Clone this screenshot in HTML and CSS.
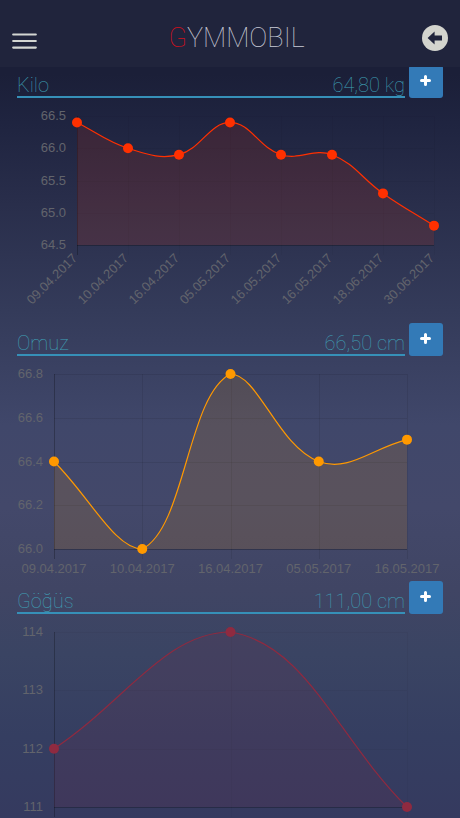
FILE: index.html
```html
<!DOCTYPE html>
<html lang="tr">
  <head>
    <meta charset="utf-8">
    <meta name="viewport" content="width=device-width, initial-scale=1.0">
    <title>Gymmobil</title>
    <link rel="stylesheet" href="styles.css">
    <script src="charts.js" defer></script>
  </head>
  <body>
    <header class="navbar">
      <button class="nav-button menu-button" aria-label="Menu">
        <svg width="25" height="16" viewBox="0 0 25 16">
          <path d="M1.2 1.5h22.6M1.2 8h22.6M1.2 14.6h22.6" stroke="#d3d6d2" stroke-width="2.2" stroke-linecap="round"/>
        </svg>
      </button>
      <h1 class="brand"><span class="brand-first">G</span>YMMOBIL</h1>
      <button class="nav-button" aria-label="Geri">
        <svg width="26" height="26" viewBox="0 0 26 26">
          <circle cx="13" cy="13" r="13" fill="#d3d4ce"/>
          <path d="M5.6 13L12.6 6.6V10.6H20V15.4H12.6V19.4Z" fill="#20243c"/>
        </svg>
      </button>
    </header>

    <main class="measures">
      <section class="measure">
        <div class="measure-head">
          <h2 class="measure-title"><span>Kilo</span><span>64,80 kg</span></h2>
          <button class="add-button" aria-label="Kilo ekle">
            <svg width="11" height="11" viewBox="0 0 11 11"><path d="M5.5 1.5v8M1.5 5.5h8" stroke="#fff" stroke-width="3" stroke-linecap="round"/></svg>
          </button>
        </div>
        <div class="chart chart-kilo" id="kilo"></div>
      </section>

      <section class="measure">
        <div class="measure-head">
          <h2 class="measure-title"><span>Omuz</span><span>66,50 cm</span></h2>
          <button class="add-button" aria-label="Omuz ekle">
            <svg width="11" height="11" viewBox="0 0 11 11"><path d="M5.5 1.5v8M1.5 5.5h8" stroke="#fff" stroke-width="3" stroke-linecap="round"/></svg>
          </button>
        </div>
        <div class="chart chart-omuz" id="omuz"></div>
      </section>

      <section class="measure">
        <div class="measure-head">
          <h2 class="measure-title"><span>Göğüs</span><span>111,00 cm</span></h2>
          <button class="add-button" aria-label="Göğüs ekle">
            <svg width="11" height="11" viewBox="0 0 11 11"><path d="M5.5 1.5v8M1.5 5.5h8" stroke="#fff" stroke-width="3" stroke-linecap="round"/></svg>
          </button>
        </div>
        <div class="chart chart-gogus" id="gogus"></div>
      </section>
    </main>
  </body>
</html>
```

FILE: styles.css
```css
html, body {
  height: 100%;
  margin: 0;
  padding: 0;
  overflow: hidden;
}
body {
  background: linear-gradient(#1b1f38 0%, #1b1f38 9%, #1f2440 15%, #292e4b 25%, #343b5a 38%, #40476a 52%, #43486a 62%, #404564 72%, #3a4463 80%, #353e61 90%, #353a5f 100%);
  color: #3fa0b6;
  font-family: Roboto, sans-serif;
}
button {
  display: flex;
  align-items: center;
  justify-content: center;
  padding: 0;
  border: 0;
  background: none;
  cursor: pointer;
}
.navbar {
  position: fixed;
  z-index: 1;
  top: 0;
  left: 0;
  right: 0;
  display: flex;
  align-items: center;
  justify-content: space-between;
  box-sizing: border-box;
  height: 67px;
  padding: 8px 12px 0;
  background: #20243c;
}
.menu-button {
  padding: 6px 14px 0 0;
}
.brand {
  margin: 0;
  color: #c8cad6;
  font-size: 27px;
  font-weight: 100;
  line-height: 48px;
}
.brand-first {
  color: #d0101c;
}
.measures {
  padding: 65px 17px 0;
}
.measure-head {
  display: flex;
  gap: 4px;
}
.measure-title {
  display: flex;
  flex: 1;
  justify-content: space-between;
  box-sizing: border-box;
  height: 33px;
  margin: 0;
  padding-top: 8px;
  border-bottom: 2px solid #3690b8;
  font-size: 20px;
  font-weight: 100;
  line-height: 24px;
}
.add-button {
  width: 34px;
  height: 33px;
  padding: 0 1px 2px 0;
  border-radius: 3px;
  background: #337ab7;
}
.chart {
  height: 225px;
}
.chart svg {
  display: block;
  width: 100%;
  height: 100%;
  overflow: visible;
}
.chart text {
  fill: #62646c;
  font-family: "Liberation Sans", Arial, sans-serif;
  font-size: 13px;
}
.grid {
  stroke: #000;
  stroke-opacity: 0.08;
}
.chart-kilo .grid, .chart-gogus .grid {
  stroke-opacity: 0.03;
}
.axis {
  stroke: #000;
  stroke-opacity: 0.25;
}
.line {
  fill: none;
  stroke: currentColor;
  stroke-width: 1.2;
}
.area {
  fill: currentColor;
  fill-opacity: 0.12;
}
.point {
  fill: currentColor;
}
.chart-kilo {
  color: #ff3000;
}
.chart-omuz {
  color: #ff9900;
}
.chart-gogus {
  color: #8f2a40;
}
```

FILE: charts.js
```js
const charts = {
  kilo: {
    labels: ['09.04.2017', '10.04.2017', '16.04.2017', '05.05.2017', '16.05.2017', '16.05.2017', '18.06.2017', '30.06.2017'],
    values: [66.4, 66.0, 65.9, 66.4, 65.9, 65.9, 65.3, 64.8],
    ticks: ['66.5', '66.0', '65.5', '65.0', '64.5'],
    left: 60, right: 9, bottom: 147, rotate: true
  },
  omuz: {
    labels: ['09.04.2017', '10.04.2017', '16.04.2017', '05.05.2017', '16.05.2017'],
    values: [66.4, 66.0, 66.8, 66.4, 66.5],
    ticks: ['66.8', '66.6', '66.4', '66.2', '66.0'],
    left: 37, right: 36, bottom: 193
  },
  gogus: {
    labels: [],
    values: [112, 114, 111],
    ticks: ['114', '113', '112', '111'],
    left: 37, right: 36, bottom: 193
  }
};
const TOP = 18;
const TENSION = 0.4;

// control points before and after a point, kept inside the chart area
function controls(prev, cur, next, bottom) {
  const d01 = Math.hypot(cur.x - prev.x, cur.y - prev.y);
  const d12 = Math.hypot(next.x - cur.x, next.y - cur.y);
  const fa = TENSION * d01 / (d01 + d12 || 1);
  const fb = TENSION * d12 / (d01 + d12 || 1);
  const cap = y => Math.max(TOP, Math.min(bottom, y));
  return {
    before: [cur.x - fa * (next.x - prev.x), cap(cur.y - fa * (next.y - prev.y))],
    after: [cur.x + fb * (next.x - prev.x), cap(cur.y + fb * (next.y - prev.y))]
  };
}

function draw(id) {
  const el = document.getElementById(id);
  const { labels, values, ticks, left, right, bottom, rotate } = charts[id];
  const end = el.clientWidth - right;
  const max = Number(ticks[0]);
  const min = Number(ticks[ticks.length - 1]);
  const points = values.map((v, i) => ({
    x: left + i * (end - left) / (values.length - 1),
    y: TOP + (max - v) / (max - min) * (bottom - TOP)
  }));
  const ctl = points.map((p, i) => controls(points[i - 1] || p, p, points[i + 1] || p, bottom));
  let path = `M${points[0].x} ${points[0].y}`;
  for (let i = 1; i < points.length; i++) {
    path += `C${ctl[i - 1].after} ${ctl[i].before} ${points[i].x} ${points[i].y}`;
  }

  let svg = '';
  ticks.forEach((t, i) => {
    const y = Math.round(TOP + i * (bottom - TOP) / (ticks.length - 1));
    const cls = i === ticks.length - 1 ? 'axis' : 'grid';
    svg += `<path class="${cls}" d="M${left} ${y + 0.5}H${end}"/>`;
    svg += `<text x="${left - 11}" y="${y + 4}" text-anchor="end">${t}</text>`;
  });
  points.forEach((p, i) => {
    const x = Math.round(p.x) + 0.5;
    svg += `<path class="${i ? 'grid' : 'axis'}" d="M${x} ${TOP}V${bottom + 10}"/>`;
  });
  labels.forEach((l, i) => {
    const x = points[i].x;
    svg += rotate
      ? `<text text-anchor="end" transform="translate(${x + 1} ${bottom + 14}) rotate(-45)">${l}</text>`
      : `<text x="${x}" y="${bottom + 24}" text-anchor="middle">${l}</text>`;
  });
  svg += `<path class="area" d="${path}V${bottom}H${left}Z"/><path class="line" d="${path}"/>`;
  points.forEach(p => {
    svg += `<circle class="point" cx="${p.x}" cy="${p.y}" r="5"/>`;
  });
  el.innerHTML = `<svg>${svg}</svg>`;
}

function drawAll() {
  Object.keys(charts).forEach(draw);
}
drawAll();
window.addEventListener('resize', drawAll);
```
